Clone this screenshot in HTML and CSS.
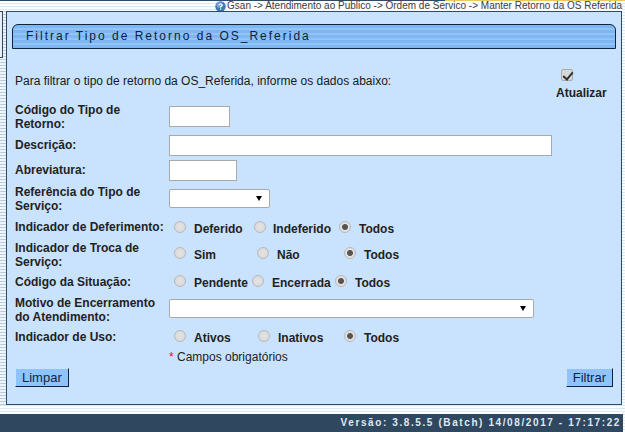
FILE: index.html
```html
<!DOCTYPE html>
<html lang="pt">
<head>
<meta charset="utf-8">
<title>Filtrar Tipo de Retorno da OS_Referida</title>
<link rel="stylesheet" href="styles.css">
</head>
<body>
<header class="topbar">
  <svg class="help" width="11" height="11" viewBox="0 0 11 11"><circle cx="5.5" cy="5.5" r="5.2" fill="#3f78b8"/><circle cx="4.4" cy="4" r="3" fill="#6f9fd6"/><path d="M3.8 4.2C3.9 2.6 7.2 2.6 7.2 4.2C7.2 5.4 5.5 5.3 5.5 6.5" fill="none" stroke="#fff" stroke-width="1.2"/><rect x="5" y="7.4" width="1.2" height="1.2" fill="#fff"/></svg>
  <span class="crumbs">Gsan -&gt; Atendimento ao Publico -&gt; Ordem de Servico -&gt; Manter Retorno da OS Referida</span>
</header>
<div class="middle">
  <aside class="rail"><div class="rail-box"></div></aside>
  <main class="panel">
    <h1 class="title">Filtrar Tipo de Retorno da OS_Referida</h1>
    <div class="intro">
      <p>Para filtrar o tipo de retorno da OS_Referida, informe os dados abaixo:</p>
      <label class="refresh"><input class="check" type="checkbox" checked><span>Atualizar</span></label>
    </div>
    <form class="form">
      <div class="row h-code"><label>Código do Tipo de Retorno:</label><input class="field w-code" type="text"></div>
      <div class="row h-desc"><label>Descrição:</label><input class="field w-desc" type="text"></div>
      <div class="row h-abbr"><label>Abreviatura:</label><input class="field w-abbr" type="text"></div>
      <div class="row h-ref"><label>Referência do Tipo de Serviço:</label><span class="select w-ref"></span></div>
      <div class="row h-def"><label>Indicador de Deferimento:</label>
        <div class="radios c-def">
          <label class="opt"><input type="radio" name="a"><b>Deferido</b></label>
          <label class="opt"><input type="radio" name="a"><b>Indeferido</b></label>
          <label class="opt"><input type="radio" name="a" checked><b>Todos</b></label>
        </div>
      </div>
      <div class="row h-troca"><label>Indicador de Troca de Serviço:</label>
        <div class="radios c-troca">
          <label class="opt"><input type="radio" name="b"><b>Sim</b></label>
          <label class="opt"><input type="radio" name="b"><b>Não</b></label>
          <label class="opt"><input type="radio" name="b" checked><b>Todos</b></label>
        </div>
      </div>
      <div class="row h-sit"><label>Código da Situação:</label>
        <div class="radios c-sit">
          <label class="opt"><input type="radio" name="c"><b>Pendente</b></label>
          <label class="opt"><input type="radio" name="c"><b>Encerrada</b></label>
          <label class="opt"><input type="radio" name="c" checked><b>Todos</b></label>
        </div>
      </div>
      <div class="row h-mot"><label>Motivo de Encerramento do Atendimento:</label><span class="select w-mot"></span></div>
      <div class="row h-uso"><label>Indicador de Uso:</label>
        <div class="radios c-uso">
          <label class="opt"><input type="radio" name="d"><b>Ativos</b></label>
          <label class="opt"><input type="radio" name="d"><b>Inativos</b></label>
          <label class="opt"><input type="radio" name="d" checked><b>Todos</b></label>
        </div>
      </div>
      <div class="row h-req"><span></span><span class="req"><i>*</i> Campos obrigatórios</span></div>
    </form>
    <div class="actions">
      <button class="btn" type="button">Limpar</button>
      <button class="btn" type="button">Filtrar</button>
    </div>
  </main>
</div>
<footer class="footer">Versão: 3.8.5.5 (Batch) 14/08/2017 - 17:17:22</footer>
</body>
</html>
```
FILE: styles.css
```css
* { box-sizing: border-box; }
html, body { margin: 0; padding: 0; }
body {
  width: 625px; height: 432px; overflow: hidden;
  display: flex; flex-direction: column;
  font: 12px "Liberation Sans", Arial, sans-serif;
  color: #1a1a1a;
  background: #fff repeating-linear-gradient(180deg, #dbe8f4 0, #dbe8f4 1px, #fbfdff 1px, #fbfdff 3px);
}
.topbar {
  height: 11px; flex: none;
  display: flex; align-items: center; justify-content: flex-end; gap: 1px;
  padding: 1px 3px 0 0;
  background: linear-gradient(90deg, #2f4a66 445px, #ecc95e 445px) no-repeat 0 0 / 100% 1px;
}
.help { flex: none; }
.crumbs { font-size: 10px; line-height: 10px; color: #3c3c3c; white-space: nowrap; background: #fdfdfd; }
.middle { flex: none; height: 394px; display: flex; }
.rail { width: 6px; flex: none; background: repeating-linear-gradient(180deg, #b9cde0 0, #b9cde0 1px, #eef4fa 1px, #eef4fa 3px); }
.rail-box { width: 3px; height: 47px; background: #e8eef5; border: 1px solid #2f4a66; border-left: 0; }
.panel {
  width: 616px; flex: none;
  background: #c9e2fd;
  border: 1px solid #2f4a66;
  padding: 12px 5px 0;
}
.title {
  margin: 0; height: 25px;
  font-size: 12px; font-weight: 400; line-height: 22px; letter-spacing: 2px;
  color: #0c1f3a;
  padding-left: 13px;
  border: 1px solid #10233f; border-radius: 6px 6px 0 0;
  background: repeating-linear-gradient(180deg, #7db6f2 0, #7db6f2 3px, #92c4f6 3px, #92c4f6 5px);
}
.intro {
  height: 53px;
  display: flex; justify-content: space-between;
  padding-left: 3px;
}
.intro p { margin: 0; padding-top: 25px; line-height: 14px; }
.refresh {
  display: flex; flex-direction: column; align-items: flex-start;
  width: 52px; margin: 20px 8px 0 0;
  font-weight: 700; line-height: 14px; color: #222;
}
.check {
  appearance: none; margin: 0 0 5px 5px; width: 12px; height: 12px; flex: none;
  border: 1px solid #aaa; border-radius: 2px; background: #d8d8d8;
  position: relative;
}
.check::after {
  content: ""; position: absolute; left: 3px; top: 0; width: 4px; height: 8px;
  border: solid #333; border-width: 0 2px 2px 0; transform: rotate(40deg);
}
.form { padding-left: 3px; }
.row { display: grid; grid-template-columns: 154px 1fr; align-items: start; }
.row > label { font-weight: 700; line-height: 14px; color: #222; padding-top: 1px; }
.h-code { height: 33px; }
.h-desc { height: 25px; }
.h-abbr { height: 24px; }
.h-ref { height: 35px; }
.h-def { height: 21px; }
.h-troca { height: 34px; }
.h-sit { height: 21px; }
.h-mot { height: 34px; }
.h-uso { height: 20px; }
.h-req { height: 19px; }
.h-desc > label, .h-abbr > label { padding-top: 3px; }
.field { display: block; height: 21px; margin: 0; border: 1px solid #a9a9a9; background: #fff; padding: 0; }
.w-code { width: 61px; margin-top: 4px; }
.w-desc { width: 383px; }
.w-abbr { width: 68px; }
.select {
  display: block; height: 19px; border: 1px solid #a9a9a9; border-radius: 2px; background: #fff; position: relative;
}
.select::after {
  content: ""; position: absolute; right: 7px; top: 6px;
  border: solid transparent; border-width: 5px 3.5px 0; border-top-color: #000;
}
.w-ref { width: 101px; margin-top: 5px; }
.w-mot { width: 365px; margin-top: 4px; }
.radios { display: grid; padding-left: 5px; }
.c-def { grid-template-columns: 80px 85px auto; margin-top: 2px; }
.c-troca { grid-template-columns: 83px 87px auto; margin-top: 7px; }
.c-sit { grid-template-columns: 78px 83px auto; margin-top: 1px; }
.c-uso { grid-template-columns: 84px 86px auto; margin-top: 1px; }
.opt { display: flex; align-items: flex-start; gap: 8px; line-height: 14px; white-space: nowrap; }
.c-def .opt:nth-child(2) { gap: 7px; }
.opt b { font-weight: 700; padding-top: 1px; color: #222; }
.opt input {
  appearance: none; margin: 0; width: 12px; height: 12px; flex: none;
  border: 1px solid #b8b8b8; border-radius: 50%;
  background: radial-gradient(circle at 50% 50%, #e4e4e4 0, #d6d6d6 100%);
}
.opt input:checked { background: radial-gradient(circle at 50% 50%, #555 0, #555 2.5px, #e2e2e2 3.5px); }
.req { color: #222; line-height: 14px; padding-top: 1px; }
.req i { color: #e0103a; font-style: normal; }
.actions { display: flex; justify-content: space-between; padding: 0 3px; }
.btn {
  height: 19px; padding: 0 6px; margin: 0;
  font: 13px "Liberation Sans", Arial, sans-serif; line-height: 15px; color: #10233f;
  background: #8fc3fb;
  border: 1px solid; border-color: #c9e2fd #10233f #10233f #c9e2fd;
  border-radius: 0;
}
.footer {
  flex: none; height: 18px; margin: 9px 2px 0 0;
  background: #2f4860; color: #dfe9f2;
  font-size: 10px; font-weight: 700; line-height: 17px; letter-spacing: 1.6px;
  text-align: right; padding-right: 2px; white-space: nowrap;
}
```
